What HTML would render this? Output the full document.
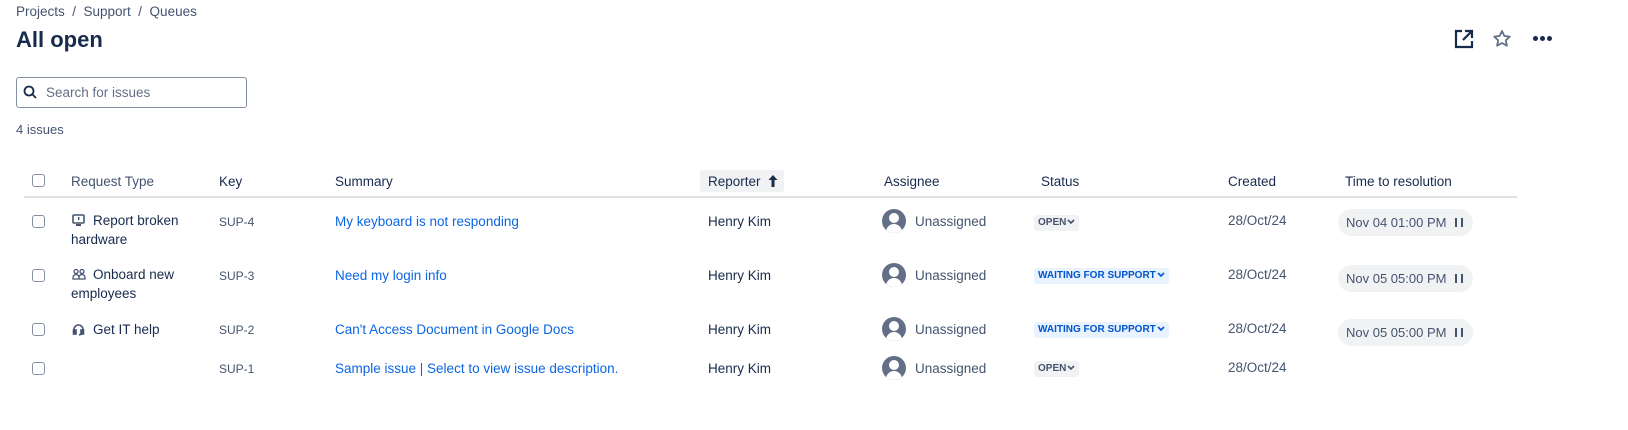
<!DOCTYPE html>
<html><head><meta charset="utf-8"><style>
*{margin:0;padding:0;box-sizing:border-box}
body{width:1628px;height:430px;background:#fff;font-family:"Liberation Sans",sans-serif;color:#172b4d;position:relative;overflow:hidden;font-size:13.5px}
.a{position:absolute;white-space:nowrap}
.cb{position:absolute;width:13px;height:13px;border:1.5px solid #8590a2;border-radius:3px;left:32px}
.h{color:#172b4d;font-size:13.5px}
.key{font-size:12px;color:#44546f}
.lnk{color:#0c66e4}
.av{position:absolute;width:24px;height:24px;border-radius:50%;background:#626f86;left:882px;overflow:hidden}
.av:before{content:"";position:absolute;left:7px;top:4px;width:10px;height:10px;border-radius:50%;background:#fff}
.av:after{content:"";position:absolute;left:4px;top:15px;width:16px;height:14px;border-radius:8px 8px 0 0;background:#fff}
.loz{position:absolute;left:1034px;height:16px;border-radius:3px;font-size:10px;font-weight:bold;padding:2px 4px;line-height:12px}
.loz svg{vertical-align:middle;margin-left:1px}
.open{background:#f1f2f4;color:#44546f}
.wait{background:#e9f2ff;color:#0055cc}
.pill{position:absolute;left:1338px;width:135px;height:27px;border-radius:14px;background:#f1f2f4;font-size:13px;color:#44546f;padding-left:8px;line-height:27px}
.pill b{position:absolute;right:10px;top:9px;width:8px;height:9px;border-left:2px solid #44546f;border-right:2px solid #44546f}
</style></head><body>
<div class="a" style="left:16px;top:4px;font-size:13.5px;color:#44546f">Projects &nbsp;/&nbsp; Support &nbsp;/&nbsp; Queues</div>
<div class="a" style="left:16px;top:27px;font-size:22px;font-weight:bold;color:#172b4d">All open</div>
<svg class="a" style="left:1453px;top:28px" width="22" height="22" viewBox="0 0 22 22" fill="none" stroke="#172b4d" stroke-width="2.2"><path d="M9 3H3v16h16v-6"/><path d="M12 3h7v7M19 3l-9 9"/></svg>
<svg class="a" style="left:1492px;top:29px" width="20" height="20" viewBox="0 0 20 20" fill="none" stroke="#626f86" stroke-width="1.8" stroke-linejoin="round"><path d="M10 2l2.4 5 5.4.6-4 3.7 1.1 5.4L10 14l-4.9 2.7 1.1-5.4-4-3.7 5.4-.6z"/></svg>
<div class="a" style="left:1533px;top:36px;width:5px;height:5px;border-radius:50%;background:#172b4d"></div>
<div class="a" style="left:1540px;top:36px;width:5px;height:5px;border-radius:50%;background:#172b4d"></div>
<div class="a" style="left:1547px;top:36px;width:5px;height:5px;border-radius:50%;background:#172b4d"></div>
<div class="a" style="left:16px;top:77px;width:231px;height:31px;border:1px solid #8590a2;border-radius:3px"></div>
<svg class="a" style="left:23px;top:85px" width="14" height="14" viewBox="0 0 14 14" fill="none" stroke="#172b4d" stroke-width="1.8"><circle cx="6" cy="6" r="4.5"/><path d="M9.3 9.3L13 13"/></svg>
<div class="a" style="left:46px;top:85px;color:#626f86">Search for issues</div>
<div class="a" style="left:16px;top:122px;color:#44546f;font-size:13px">4 issues</div>

<div class="cb" style="top:174px"></div>
<div class="a" style="left:71px;top:174px;color:#44546f">Request Type</div>
<div class="a h" style="left:219px;top:174px">Key</div>
<div class="a h" style="left:335px;top:174px">Summary</div>
<div class="a" style="left:700px;top:170px;width:84px;height:22px;background:#f1f2f4;border-radius:3px"></div>
<div class="a h" style="left:708px;top:174px">Reporter</div>
<svg class="a" style="left:768px;top:175px" width="10" height="12" viewBox="0 0 10 12" fill="#172b4d"><path d="M5 0L9.5 5H6.5V12H3.5V5H0.5z"/></svg>
<div class="a h" style="left:884px;top:174px">Assignee</div>
<div class="a h" style="left:1041px;top:174px">Status</div>
<div class="a h" style="left:1228px;top:174px">Created</div>
<div class="a h" style="left:1345px;top:174px">Time to resolution</div>
<div class="a" style="left:24px;top:196px;width:1493px;height:2px;background:#dcdfe4"></div>

<!-- row 1 -->
<div class="cb" style="top:215px"></div>
<svg class="a" style="left:72px;top:214px" width="13" height="13" viewBox="0 0 13 13"><rect x="1" y="1" width="11" height="8" rx="1" fill="none" stroke="#44546f" stroke-width="1.6"/><rect x="6" y="3" width="1.4" height="3" fill="#44546f"/><rect x="4" y="10" width="5" height="2" fill="#44546f"/></svg>
<div class="a" style="left:93px;top:213px;color:#172b4d">Report broken</div>
<div class="a" style="left:71px;top:232px;color:#172b4d">hardware</div>
<div class="a key" style="left:219px;top:215px">SUP-4</div>
<div class="a lnk" style="left:335px;top:214px">My keyboard is not responding</div>
<div class="a" style="left:708px;top:214px">Henry Kim</div>
<div class="av" style="top:209px"></div>
<div class="a" style="left:915px;top:214px;color:#44546f">Unassigned</div>
<div class="loz open" style="top:215px">OPEN<svg width="8" height="6" viewBox="0 0 8 6"><path d="M1 1l3 3 3-3" fill="none" stroke="currentColor" stroke-width="1.6"/></svg></div>
<div class="a" style="left:1228px;top:213px;color:#44546f">28/Oct/24</div>
<div class="pill" style="top:209px">Nov 04 01:00 PM<b></b></div>

<!-- row 2 -->
<div class="cb" style="top:269px"></div>
<svg class="a" style="left:72px;top:268px" width="14" height="13" viewBox="0 0 14 13" fill="none" stroke="#44546f" stroke-width="1.3"><circle cx="4" cy="3.5" r="2"/><circle cx="10" cy="3.5" r="2"/><path d="M1 11v-1.5a3 3 0 016 0V11zM7 11v-1.5a3 3 0 016 0V11z"/></svg>
<div class="a" style="left:93px;top:267px;color:#172b4d">Onboard new</div>
<div class="a" style="left:71px;top:286px;color:#172b4d">employees</div>
<div class="a key" style="left:219px;top:269px">SUP-3</div>
<div class="a lnk" style="left:335px;top:268px">Need my login info</div>
<div class="a" style="left:708px;top:268px">Henry Kim</div>
<div class="av" style="top:263px"></div>
<div class="a" style="left:915px;top:268px;color:#44546f">Unassigned</div>
<div class="loz wait" style="top:268px">WAITING FOR SUPPORT<svg width="8" height="6" viewBox="0 0 8 6"><path d="M1 1l3 3 3-3" fill="none" stroke="currentColor" stroke-width="1.6"/></svg></div>
<div class="a" style="left:1228px;top:267px;color:#44546f">28/Oct/24</div>
<div class="pill" style="top:265px">Nov 05 05:00 PM<b></b></div>

<!-- row 3 -->
<div class="cb" style="top:323px"></div>
<svg class="a" style="left:72px;top:323px" width="13" height="13" viewBox="0 0 13 13" fill="none" stroke="#44546f" stroke-width="1.6"><path d="M2 9V6.5a4.5 4.5 0 019 0V9"/><rect x="1.5" y="7" width="2.5" height="4" fill="#44546f"/><rect x="9" y="7" width="2.5" height="4" fill="#44546f"/><path d="M10 11l-3 1"/></svg>
<div class="a" style="left:93px;top:322px;color:#172b4d">Get IT help</div>
<div class="a key" style="left:219px;top:323px">SUP-2</div>
<div class="a lnk" style="left:335px;top:322px">Can't Access Document in Google Docs</div>
<div class="a" style="left:708px;top:322px">Henry Kim</div>
<div class="av" style="top:317px"></div>
<div class="a" style="left:915px;top:322px;color:#44546f">Unassigned</div>
<div class="loz wait" style="top:322px">WAITING FOR SUPPORT<svg width="8" height="6" viewBox="0 0 8 6"><path d="M1 1l3 3 3-3" fill="none" stroke="currentColor" stroke-width="1.6"/></svg></div>
<div class="a" style="left:1228px;top:321px;color:#44546f">28/Oct/24</div>
<div class="pill" style="top:319px">Nov 05 05:00 PM<b></b></div>

<!-- row 4 -->
<div class="cb" style="top:362px"></div>
<div class="a key" style="left:219px;top:362px">SUP-1</div>
<div class="a lnk" style="left:335px;top:361px">Sample issue | Select to view issue description.</div>
<div class="a" style="left:708px;top:361px">Henry Kim</div>
<div class="av" style="top:356px"></div>
<div class="a" style="left:915px;top:361px;color:#44546f">Unassigned</div>
<div class="loz open" style="top:361px">OPEN<svg width="8" height="6" viewBox="0 0 8 6"><path d="M1 1l3 3 3-3" fill="none" stroke="currentColor" stroke-width="1.6"/></svg></div>
<div class="a" style="left:1228px;top:360px;color:#44546f">28/Oct/24</div>
</body></html>
